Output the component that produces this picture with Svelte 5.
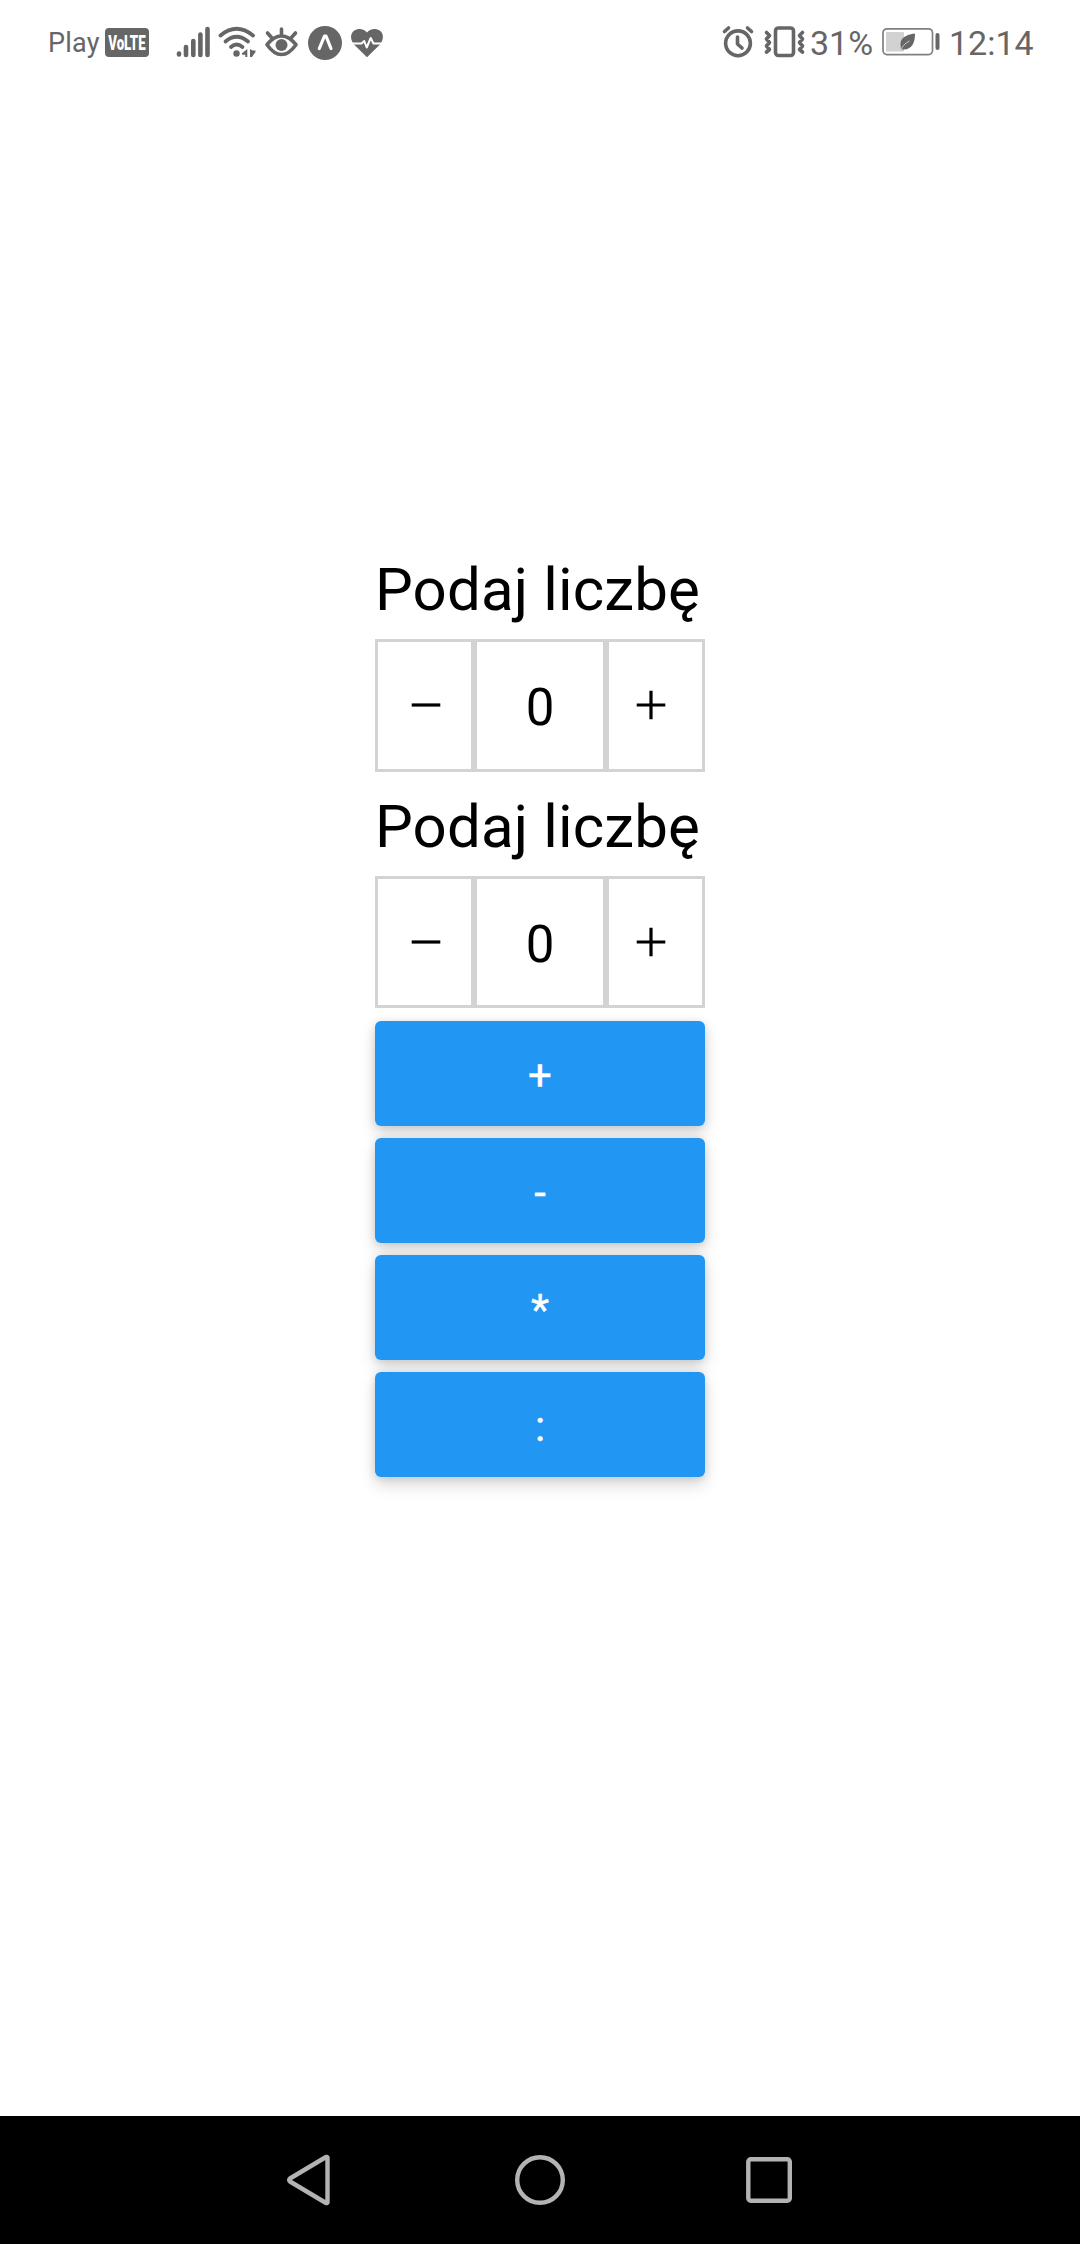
<script>
  let values = $state([0, 0]);
  const operations = ['+', '-', '*', ':'];
</script>

<div class="screen">
  <header class="status">
    <span class="carrier">Play</span>
    <svg class="volte" width="46" height="30" viewBox="104 27 46 30">
      <rect x="105" y="28" width="44" height="29" rx="4" fill="#666" />
      <text transform="translate(108.2 50) scale(0.66 1)">VoLTE</text>
    </svg>
    <svg class="left-icons" width="216" height="40" viewBox="172 22 216 40" fill="none" stroke="#666" stroke-linecap="round" stroke-linejoin="round">
      <path stroke-width="4.6" d="M179 53.5v1M186 47v8M193.3 41v14M200.4 34.5v20.5M207.5 29v26" />
      <!-- wifi -->
      <g stroke-width="3.8">
        <path d="M220.5 35.5Q236.5 22 253 35.5" />
        <path d="M225.5 41.5Q236.5 32 248 41.5" />
        <path d="M231 47Q236.5 42 242.5 47" />
      </g>
      <circle cx="236.5" cy="53.5" r="3.2" fill="#666" stroke="none" />
      <path d="M247.300 49v8h-2v-2.300h-3.300v-1.400zM250 49v8h2l3.500-5v-1.500h-2.800z" fill="#666" stroke="none" />
      <!-- eye -->
      <path stroke-width="3.6" d="M267 44.700Q274 36 281.500 36T296 44.700Q289 54.500 281.500 54.500T267 44.700ZM281.500 29v6M267.500 33l4 4.500M295.500 33l-4 4.500" />
      <circle cx="281.500" cy="45" r="6" fill="#666" stroke="none" />
      <!-- round badge -->
      <circle cx="325" cy="43" r="17" fill="#666" stroke="none" />
      <path stroke="#fff" stroke-width="3.200" d="M319.300 48.500L324.500 36h1.500l5 12.500" />
      <!-- heart rate -->
      <path d="M367 57.300L354.500 45C350 40 350 34 354 30.800C358 27.700 364 28.400 367 32.500C370 28.400 376 27.700 380 30.800C384 34 384 40 379.500 45Z" fill="#666" stroke="none" />
      <path stroke="#fff" stroke-width="2" stroke-linecap="butt" d="M350 43.500h11.500l2.700-2.500 2.500 6.500 4-9.500 2.800 5.500H384" />
    </svg>
    <span class="spacer"></span>
    <svg class="right-icons" width="88" height="40" viewBox="720 22 88 40" fill="none" stroke="#666" stroke-linecap="round" stroke-linejoin="round">
      <!-- alarm -->
      <circle cx="738" cy="43.300" r="12.400" stroke-width="3.600" />
      <path stroke-width="3.600" d="M737.500 37v7l4.500 4M724.500 31.500l4-3.500M751.500 31.500l-4-3.500" />
      <!-- vibrate -->
      <rect x="775.500" y="28" width="18" height="27.500" rx="3" stroke-width="3.600" />
      <path stroke-width="3.600" d="M766.500 32.500l3 3-3 3.500 3 3.500-3 3.500 3 3.500-3 2.500M802.500 32.500l-3 3 3 3.500-3 3.500 3 3.500-3 3.500 3 2.500" />
    </svg>
    <span class="percent">31%</span>
    <svg class="battery" width="60" height="30" viewBox="881 28 60 30">
      <rect x="883" y="29.800" width="49.500" height="25.800" rx="4" fill="#fff" stroke="#808080" stroke-width="1.700" />
      <rect x="886" y="33" width="18" height="19.500" rx="1" fill="#d2d2d2" />
      <path d="M915 34.500C906 36 900.500 38.500 900.500 45.500L901 51L902.500 50.500C912 51 915 44 915 34.500Z" fill="#666" />
      <path d="M901 51.500Q902 46 909.500 42" fill="none" stroke="#ccc" stroke-width="1" />
      <rect x="935.500" y="34" width="4" height="17" rx="2" fill="#666" />
    </svg>
    <time>12:14</time>
  </header>

  <main>
    {#each values as value, i}
      <section>
        <h2>Podaj liczbę</h2>
        <div class="stepper" class:tall={i === 0}>
          <button class="minus" aria-label="minus" onclick={() => values[i]--}>
            <svg width="30" height="30" viewBox="0 0 30 30"><path d="M.700 15H29.300" /></svg>
          </button>
          <output>{value}</output>
          <button class="plus" aria-label="plus" onclick={() => values[i]++}>
            <svg width="30" height="30" viewBox="0 0 30 30"><path d="M.700 15H29.300M15 .700V29.300" /></svg>
          </button>
        </div>
      </section>
    {/each}
    <div class="operations">
      {#each operations as op}
        <button>{op}</button>
      {/each}
    </div>
  </main>

  <nav>
    <svg width="50" height="54" viewBox="284 2153 50 54"><path d="M327.500 2157.500V2202.500Q327 2203.500 326 2203L290 2181.500Q288.500 2180 290 2178.500L326 2157Q327 2156.500 327.500 2157.500Z" /></svg>
    <svg width="60" height="54" viewBox="509 2153 60 54"><circle cx="540" cy="2180" r="22.800" /></svg>
    <svg width="50" height="54" viewBox="744 2153 50 54"><rect x="748.300" y="2159.300" width="41.500" height="41.500" rx="2.500" /></svg>
  </nav>
</div>

<style>
  :global(body) {
    margin: 0;
    background: #fff;
  }
  .screen {
    width: 1080px;
    height: 2244px;
    display: flex;
    flex-direction: column;
    background: #fff;
    font-family: Roboto, sans-serif;
    overflow: hidden;
  }
  .status {
    flex: none;
    height: 84px;
    box-sizing: border-box;
    padding: 0 47px 0 48px;
    display: flex;
    align-items: center;
    color: #666;
  }
  .status svg {
    flex: none;
  }
  .carrier {
    width: 56px;
    padding-top: 2px;
    font-size: 27px;
    line-height: 32px;
    letter-spacing: 0.2px;
  }
  .volte {
    margin-right: 22px;
    overflow: visible;
  }
  .volte text {
    font: 900 20px Roboto, sans-serif;
    fill: #fff;
  }
  .spacer {
    flex: 1;
  }
  .percent {
    width: 71px;
    margin-left: 2px;
    padding-top: 2px;
    font-size: 34px;
    line-height: 40px;
    white-space: nowrap;
  }
  .battery {
    margin-right: 8px;
  }
  time {
    width: 84px;
    padding-top: 2px;
    font-size: 34px;
    line-height: 40px;
    white-space: nowrap;
  }
  main {
    flex: 1;
    width: 330px;
    margin: 0 auto;
    padding-top: 466px;
  }
  h2 {
    margin: 0 0 10px;
    font-size: 60px;
    font-weight: 400;
    line-height: 79px;
    letter-spacing: 0.15px;
    color: #000;
    white-space: nowrap;
  }
  section {
    margin-bottom: 15px;
  }
  section + section {
    margin-bottom: 13px;
  }
  .stepper {
    display: grid;
    grid-template-columns: 99px 132px 99px;
    height: 132px;
  }
  .stepper.tall {
    height: 133px;
  }
  .stepper > * {
    box-sizing: border-box;
    margin: 0;
    padding: 0;
    border: 3px solid #d3d3d3;
    background: #fff;
    color: #000;
    display: flex;
    align-items: center;
    justify-content: center;
  }
  .stepper svg {
    fill: none;
    stroke: #000;
    stroke-width: 3.2;
  }
  .stepper .minus {
    padding: 0 0 1px 3px;
  }
  .stepper .plus {
    padding: 0 9px 1px 0;
  }
  .stepper output {
    padding-top: 5px;
    font-size: 51px;
    line-height: 60px;
  }
  .operations {
    display: flex;
    flex-direction: column;
    gap: 12px;
  }
  .operations button {
    height: 105px;
    border: 0;
    border-radius: 6px;
    padding: 4px 0 0;
    background: #2196f3;
    color: #fff;
    font: 400 42px/50px Roboto, sans-serif;
    -webkit-text-stroke: 0.4px #fff;
    box-shadow: 0 8px 16px rgba(0, 0, 0, 0.15), 0 1px 8px rgba(0, 0, 0, 0.12);
  }
  nav {
    flex: none;
    height: 128px;
    box-sizing: border-box;
    padding: 0 286px 0 284px;
    display: flex;
    align-items: center;
    justify-content: space-between;
    background: #000;
  }
  nav svg {
    fill: none;
    stroke: #b3b3b3;
    stroke-width: 4.4;
    stroke-linejoin: round;
  }
</style>
